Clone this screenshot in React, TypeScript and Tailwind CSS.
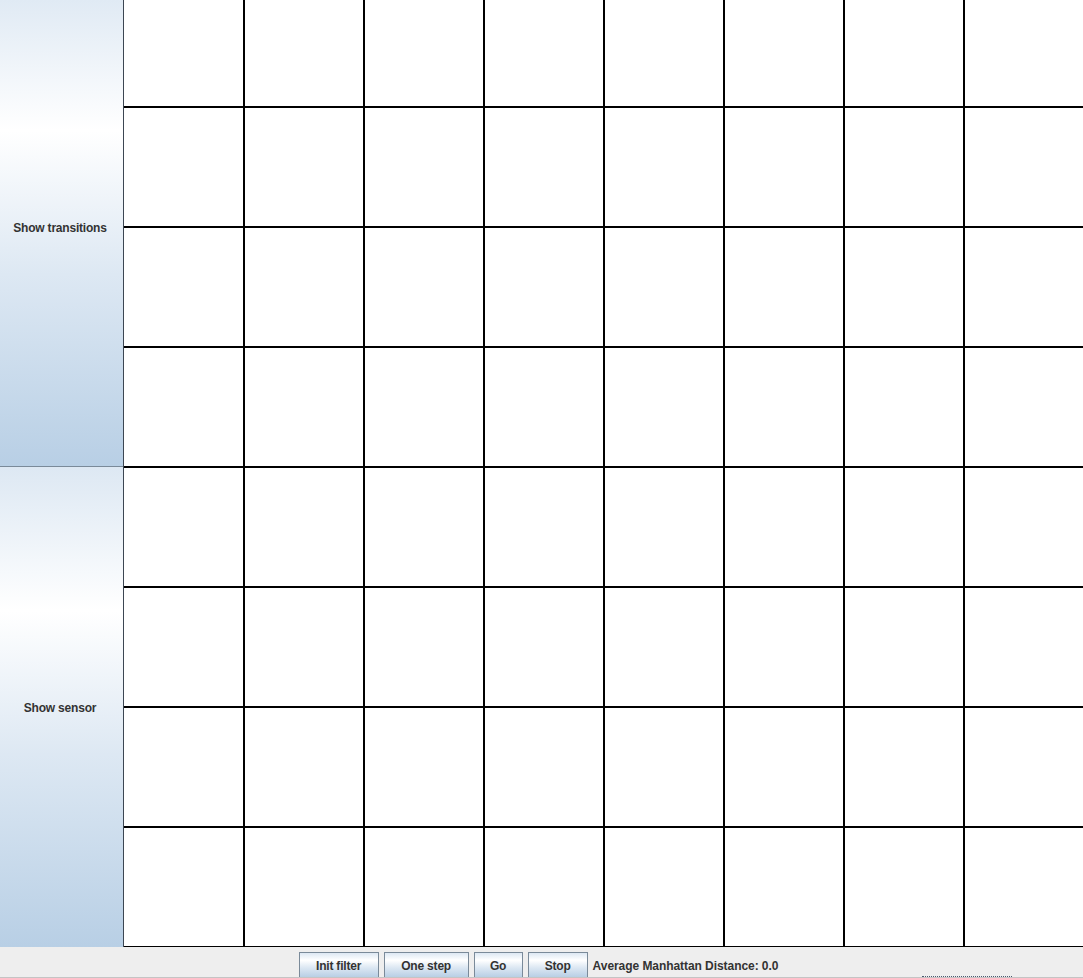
const rows = [0, 1, 2, 3, 4, 5, 6, 7];
const cols = [0, 1, 2, 3, 4, 5, 6, 7];

const oceanBg =
  'bg-[linear-gradient(to_bottom,#dde8f3_0%,#ffffff_30%,#dde8f3_60%,#b8cfe5_100%)]';

interface ToolButtonProps {
  label: string;
  width: string;
}

function ToolButton({ label, width }: ToolButtonProps) {
  return (
    <button
      className={`${width} h-[26px] shrink-0 border border-[#7a8a99] ${oceanBg} pt-[2px] text-[12px] tracking-[-0.2px] font-bold text-[#333333] flex items-center justify-center`}
    >
      {label}
    </button>
  );
}

export default function App() {
  return (
    <div className="w-[1083px] h-[978px] overflow-hidden bg-[#eeeeee] font-['Liberation_Sans',Arial,sans-serif]">
      {/* Main area: side buttons + grid, 960px tall content cut at the top */}
      <div className="h-[947px] overflow-hidden flex flex-col justify-end">
        <div className="flex h-[960px] shrink-0">
          <div className="w-[124px] shrink-0 flex flex-col border-r border-[#3c4652]">
            <button
              className={`h-[480px] w-full border-b border-[#7a8a99] ${oceanBg} pt-[2px] pr-[3px] text-[12px] tracking-[-0.2px] font-bold text-[#333333] flex items-center justify-center`}
            >
              Show transitions
            </button>
            <button
              className={`h-[480px] w-full ${oceanBg} pt-[2px] pr-[3px] text-[12px] tracking-[-0.2px] font-bold text-[#333333] flex items-center justify-center`}
            >
              Show sensor
            </button>
          </div>
          <div className="flex-1 overflow-hidden bg-white">
            {rows.map((r) => (
              <div key={r} className="flex">
                {cols.map((c) => (
                  <div
                    key={c}
                    className={
                      c === 0
                        ? 'w-[120px] h-[120px] shrink-0 border border-l-0 border-black bg-white'
                        : 'w-[120px] h-[120px] shrink-0 border border-black bg-white'
                    }
                  />
                ))}
              </div>
            ))}
          </div>
        </div>
      </div>

      {/* Bottom control bar */}
      <div className="relative h-[31px] border-b border-[#c4c4c4] bg-[#eeeeee]">
        <div className="h-[30px] overflow-hidden flex justify-center items-start gap-[5px] pt-[5px] pr-[2px]">
          <ToolButton label="Init filter" width="w-[80px]" />
          <ToolButton label="One step" width="w-[85px]" />
          <ToolButton label="Go" width="w-[49px]" />
          <ToolButton label="Stop" width="w-[60px]" />
          <span className="h-[26px] pt-[2px] flex items-center text-[12px] tracking-[-0.06px] font-bold text-[#333333] pr-[4px]">
            Average Manhattan Distance: 0.0
          </span>
        </div>
        <div className="absolute left-[922px] top-[29px] w-[90px] border-t border-dotted border-[#4a5a70]" />
      </div>
    </div>
  );
}
